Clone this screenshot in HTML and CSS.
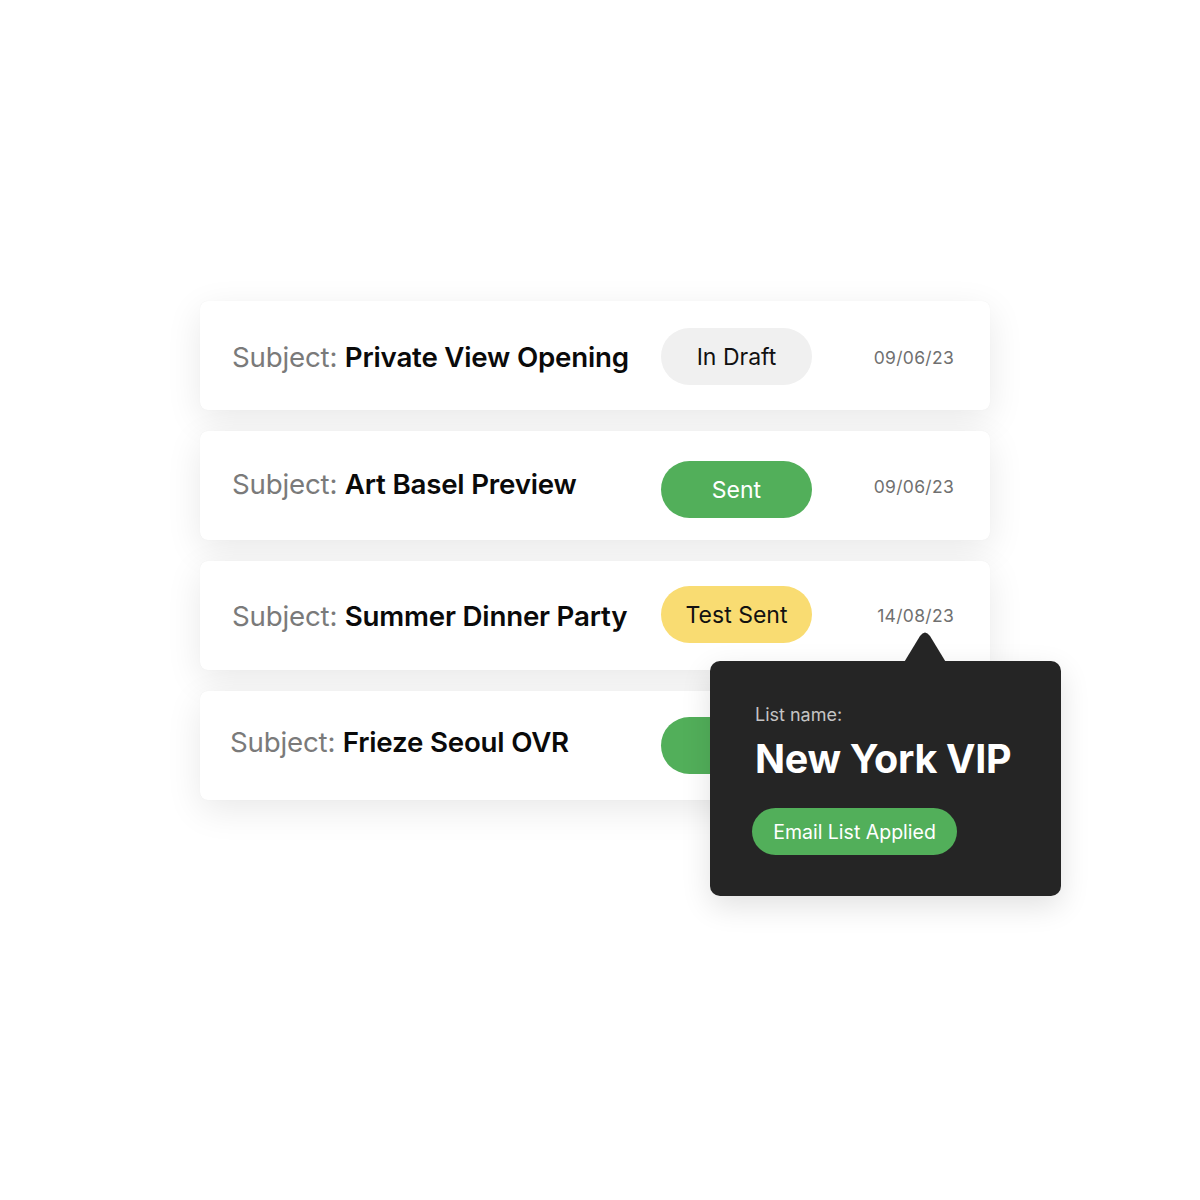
FILE: index.html
```html
<!DOCTYPE html>
<html>
<head>
<meta charset="utf-8">
<link rel="stylesheet" href="styles.css">
</head>
<body>
<div class="stage">
  <div class="list">
    <div class="card">
      <div class="subject"><span class="label">Subject:</span> <span class="title">Private View Opening</span></div>
      <div class="pill draft">In Draft</div>
      <div class="date">09/06/23</div>
    </div>
    <div class="card">
      <div class="subject"><span class="label">Subject:</span> <span class="title">Art Basel Preview</span></div>
      <div class="pill sent">Sent</div>
      <div class="date">09/06/23</div>
    </div>
    <div class="card">
      <div class="subject"><span class="label">Subject:</span> <span class="title">Summer Dinner Party</span></div>
      <div class="pill test">Test Sent</div>
      <div class="date">14/08/23</div>
    </div>
    <div class="card">
      <div class="subject"><span class="label">Subject:</span> <span class="title">Frieze Seoul OVR</span></div>
      <div class="pill sent hidden-pill"></div>
      <div class="date"></div>
    </div>
    <div class="tooltip">
      <svg class="arrow" width="44" height="32" viewBox="0 0 44 32"><path d="M0 32 L17 4 Q22 -3 27 4 L44 32 Z" fill="#252525"/></svg>
      <div class="tip-label">List name:</div>
      <div class="tip-title">New York VIP</div>
      <div class="tip-pill">Email List Applied</div>
    </div>
  </div>
</div>
</body>
</html>
```
FILE: styles.css
```css
html, body {
  margin: 0;
  padding: 0;
  background: #ffffff;
}
body {
  font-family: Inter, "Noto Sans", sans-serif;
  width: 1200px;
  height: 1200px;
}
.stage {
  padding-top: 301px;
  padding-left: 200px;
}
.list {
  position: relative;
  width: 790px;
  display: flex;
  flex-direction: column;
  gap: 21px;
}
.card {
  height: 109px;
  background: #fff;
  border-radius: 8px;
  box-shadow: 0 0 1px rgba(0,0,0,0.06), 0 10px 36px rgba(0,0,0,0.09);
  display: grid;
  grid-template-columns: 429px 151px 1fr;
  align-items: center;
  padding: 0 36px 0 32px;
  box-sizing: border-box;
}
.subject {
  font-size: 27.7px;
  white-space: nowrap;
  letter-spacing: -0.2px;
}
.card:first-child .subject { margin-top: 3px; }
.card:nth-child(2) .subject { margin-top: -4px; }
.card:nth-child(3) .subject { margin-top: 0; }
.card:nth-child(4) .subject { margin-top: -7px; margin-left: -2px; }
.label {
  color: #7a7a7a;
  font-weight: 400;
}
.title {
  color: #0a0a0a;
  font-weight: 600;
}
.pill {
  height: 57px;
  border-radius: 29px;
  display: flex;
  align-items: center;
  justify-content: center;
  font-size: 23px;
  color: #111;
}
.draft { background: #f0f0f0; margin-top: 2px; }
.sent { background: #52af5a; color: #fff; margin-top: 8px; }
.hidden-pill { margin-top: 0; }
.test { background: #f9dc72; margin-top: -2px; }
.date {
  justify-self: end;
  font-size: 17.5px;
  color: #707070;
  letter-spacing: 0.3px;
}
.card:first-child .date { margin-top: 4px; }
.card:nth-child(2) .date { margin-top: 2px; }
.tooltip {
  position: absolute;
  left: 510px;
  top: 360px;
  width: 351px;
  height: 235px;
  box-sizing: border-box;
  background: #252525;
  border-radius: 10px;
  padding: 41px 0 0 42px;
  box-shadow: 0 10px 30px rgba(0,0,0,0.12);
}
.arrow {
  position: absolute;
  left: 193px;
  top: -29px;
}
.tip-label {
  color: #c4c4c4;
  font-size: 18px;
  margin-left: 3px;
  line-height: 26px;
}
.tip-title {
  color: #fff;
  font-size: 39.5px;
  font-weight: 700;
  margin-left: 3px;
  margin-top: 8px;
  line-height: 46px;
  letter-spacing: -0.3px;
}
.tip-pill {
  margin-top: 26px;
  width: 205px;
  height: 47px;
  border-radius: 24px;
  background: #52af5a;
  color: #fff;
  font-size: 19.5px;
  display: flex;
  align-items: center;
  justify-content: center;
}
```
